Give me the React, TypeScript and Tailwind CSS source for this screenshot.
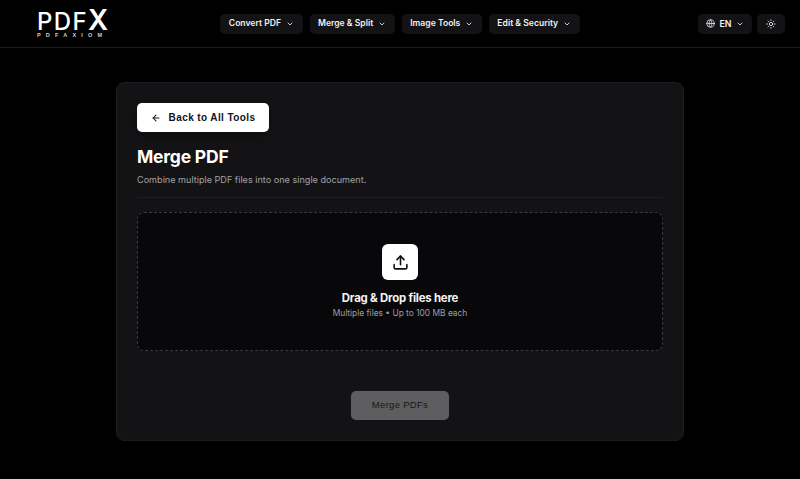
import { ArrowLeft, ChevronDown, Globe, Sun, Upload } from "lucide-react";

const navItems = ["Convert PDF", "Merge & Split", "Image Tools", "Edit & Security"];

function NavButton({ label }: { label: string }) {
  return (
    <button className="flex h-[20px] items-center gap-[5px] rounded-[5px] bg-[#131315] px-[8.5px] text-[8.6px] font-semibold text-[#f1f1f3]">
      {label}
      <ChevronDown className="h-[8px] w-[8px]" strokeWidth={2.5} />
    </button>
  );
}

export default function App() {
  return (
    <div className="h-[479px] w-[800px] overflow-hidden bg-black font-['Inter',sans-serif] text-white">
      <header className="grid h-[48px] grid-cols-[1fr_auto_1fr] items-center border-b border-[#1c1c1e] px-[15px]">
        <div className="ml-[22px] flex w-[71px] flex-col">
          <span className="flex h-[22px] items-end text-[24px] font-medium leading-[19px] tracking-[1.4px]">
            PDF<span className="text-[28px] font-semibold leading-[21px] tracking-normal">X</span>
          </span>
          <span className="mt-[1px] font-['Liberation_Sans',sans-serif] text-[5.5px] font-bold leading-[6px] tracking-[5.2px] text-[#d0d0d0]">PDFAXIOM</span>
        </div>
        <nav className="flex gap-[7px]">
          {navItems.map((item) => (
            <NavButton key={item} label={item} />
          ))}
        </nav>
        <div className="flex justify-end gap-[5px]">
          <button className="flex h-[20px] w-[54px] items-center justify-center gap-[4px] rounded-[5px] bg-[#131315] text-[8.8px] font-semibold text-[#f1f1f3]">
            <Globe className="h-[9px] w-[9px]" />
            EN
            <ChevronDown className="h-[8px] w-[8px]" strokeWidth={2.5} />
          </button>
          <button className="flex h-[20px] w-[28px] items-center justify-center rounded-[5px] bg-[#131315] text-[#f1f1f3]">
            <Sun className="h-[10px] w-[10px]" />
          </button>
        </div>
      </header>

      <main className="flex justify-center pt-[34px]">
        <section className="flex h-[359px] w-[568px] flex-col rounded-[8px] border border-[#1b1b1e] bg-[#131315] px-[20px] pt-[20px]">
          <button className="flex h-[29px] w-[132px] items-center justify-center gap-[8px] rounded-[5px] bg-white font-['Liberation_Sans',sans-serif] text-[10px] font-bold tracking-[0.4px] text-[#111122] shadow-[0_2px_8px_rgba(0,0,0,0.4)]">
            <ArrowLeft className="h-[10px] w-[10px]" strokeWidth={2.5} />
            Back to All Tools
          </button>
          <h1 className="mt-[14px] text-[17.5px] font-bold leading-[22px] tracking-[-0.2px] text-white">Merge PDF</h1>
          <p className="mt-[5px] text-[9.1px] leading-[14px] text-[#a1a1a6]">Combine multiple PDF files into one single document.</p>
          <div className="mt-[10px] h-px bg-[#1f1f22]" />
          <div className="mt-[14px] flex h-[139px] flex-col items-center rounded-[7px] border border-dashed border-[#3a3a3e] bg-[#08080a] pt-[31px]">
            <div className="flex h-[36px] w-[36px] items-center justify-center rounded-[6px] bg-white text-[#111]">
              <Upload className="h-[17px] w-[17px]" strokeWidth={2.25} />
            </div>
            <p className="mt-[11px] text-[11.4px] font-bold leading-[15px] tracking-[-0.2px] text-[#f4f4f5]">Drag &amp; Drop files here</p>
            <p className="mt-[1px] text-[8.4px] leading-[13px] text-[#9e9ea3]">Multiple files • Up to 100 MB each</p>
          </div>
          <button className="mx-auto mt-[40px] h-[29px] w-[98px] rounded-[5px] bg-[#5e5e60] font-['Liberation_Sans',sans-serif] text-[9.5px] tracking-[0.3px] text-[#16161a]">
            Merge PDFs
          </button>
        </section>
      </main>
    </div>
  );
}
